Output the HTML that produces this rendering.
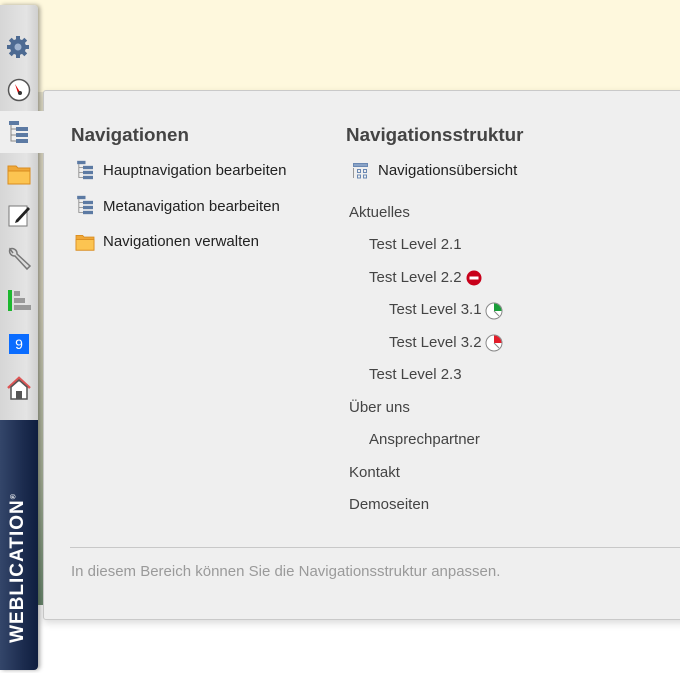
<!DOCTYPE html>
<html><head><meta charset="utf-8"><style>
*{margin:0;padding:0;box-sizing:border-box}
body{width:680px;height:673px;overflow:hidden;background:#fff;font-family:"Liberation Sans",sans-serif;position:relative}
.top{position:absolute;left:0;top:0;width:680px;height:92px;background:#fef8dd}
.strip{position:absolute;left:36px;top:92px;width:10px;height:513px;background:linear-gradient(#e6e2cc,#d6d2bc 40%,#a9b39a 75%,#6c8a70)}
.side{position:absolute;left:0;top:5px;width:38px;height:665px;background:linear-gradient(90deg,#d6d6d6,#e4e4e4 70%,#cfcfcf);border-radius:0 4px 4px 0;box-shadow:2px 0 4px rgba(0,0,0,.35)}
.logo{position:absolute;left:0;top:420px;width:38px;height:250px;background:linear-gradient(90deg,#34466a,#1c2c4f 60%,#0f1e3f);border-radius:0 0 4px 0}
.logo span{position:absolute;left:-62px;top:137px;width:160px;transform:rotate(-90deg);color:#fff;font-weight:bold;font-size:19px;letter-spacing:1px;text-align:center}
.active{position:absolute;left:0;top:111px;width:46px;height:42px;background:#efefef}
.panel{position:absolute;left:43px;top:90px;width:650px;height:530px;background:#efefef;border:1px solid #c9c9c9;border-radius:3px;box-shadow:0 3px 8px rgba(0,0,0,.15)}
.ic{position:absolute}
h2{position:absolute;font-size:18.8px;font-weight:bold;color:#444}
.it{position:absolute;font-size:15px;color:#222}
.t{position:absolute;font-size:15px;color:#444}
.hr{position:absolute;left:70px;top:547px;width:610px;height:1px;background:#c8c8c8}
.foot{position:absolute;left:71px;top:563px;font-size:15px;color:#9a9a9a}
</style></head><body>
<div class="top"></div>
<div class="strip"></div>
<div class="panel"></div>
<div class="side"></div>
<div class="active"></div>
<div class="logo"><span>WEBLICATION<sup style="font-size:7px">®</sup></span></div>

<svg class="ic" style="left:6px;top:35px" width="24" height="24" viewBox="0 0 24 24"><g fill="#4d6a92"><circle cx="12" cy="12" r="8"/><rect x="10" y="1" width="4" height="22"/><rect x="1" y="10" width="22" height="4"/><rect x="10" y="1" width="4" height="22" transform="rotate(45 12 12)"/><rect x="10" y="1" width="4" height="22" transform="rotate(-45 12 12)"/></g><circle cx="12" cy="12" r="3.5" fill="#9fb3cf"/></svg>
<svg class="ic" style="left:7px;top:78px" width="24" height="24" viewBox="0 0 24 24"><circle cx="12" cy="12" r="10.5" fill="#fff" stroke="#555" stroke-width="1.5"/><path d="M8 6 L13 14 L11 15Z" fill="#d00"/><circle cx="13" cy="15" r="2" fill="#333"/></svg>
<svg class="ic" style="left:8px;top:120px" width="22" height="24" viewBox="0 0 22 24"><g fill="#5c7aa3"><rect x="1" y="1" width="10" height="4"/><rect x="8" y="7" width="12" height="4"/><rect x="8" y="13" width="12" height="4"/><rect x="8" y="19" width="12" height="4"/></g><path d="M3 5V21H8M3 9H8M3 15H8" stroke="#888" fill="none"/></svg>
<svg class="ic" style="left:7px;top:163px" width="24" height="22" viewBox="0 0 24 22"><path d="M1 3H9L11 5H23V21H1Z" fill="#f0a838" stroke="#d98c1f"/><path d="M1 8H23V21H1Z" fill="#fcc451" stroke="#d98c1f"/></svg>
<svg class="ic" style="left:8px;top:204px" width="24" height="24" viewBox="0 0 24 24"><rect x="1" y="2" width="18" height="20" fill="#fff" stroke="#777"/><path d="M8 16L20 3L22 5L10 18L7 19Z" fill="#222"/></svg>
<svg class="ic" style="left:6px;top:246px" width="26" height="26" viewBox="0 0 26 26"><path d="M4 3A5 5 0 0 0 9 10L21 23L24 20L11 8A5 5 0 0 0 4 3L7 7Z" fill="#ddd" stroke="#777" stroke-width="1.5"/></svg>
<svg class="ic" style="left:8px;top:290px" width="24" height="22" viewBox="0 0 24 22"><rect x="0" y="0" width="4" height="21" fill="#1db82f"/><rect x="6" y="1" width="6" height="5" fill="#999"/><rect x="6" y="8" width="11" height="5" fill="#999"/><rect x="6" y="15" width="17" height="5" fill="#999"/></svg>
<div class="ic" style="left:9px;top:334px;width:20px;height:20px;background:#0a6cff;color:#fff;font-size:14px;text-align:center;line-height:20px">9</div>
<svg class="ic" style="left:6px;top:376px" width="26" height="24" viewBox="0 0 26 24"><path d="M2 12L13 2L24 12" fill="none" stroke="#d55" stroke-width="2.5"/><path d="M5 11V23H21V11L13 4Z" fill="#fff" stroke="#555" stroke-width="1.5"/><rect x="10" y="15" width="6" height="8" fill="#555"/></svg>

<h2 style="left:71px;top:124px">Navigationen</h2>
<h2 style="left:346px;top:124px">Navigationsstruktur</h2>

<svg class="ic" style="left:76px;top:160px" width="19" height="20" viewBox="0 0 22 24"><g fill="#5c7aa3"><rect x="1" y="1" width="10" height="4"/><rect x="8" y="7" width="12" height="4"/><rect x="8" y="13" width="12" height="4"/><rect x="8" y="19" width="12" height="4"/></g><path d="M3 5V21H8M3 9H8M3 15H8" stroke="#888" fill="none"/></svg>
<div class="it" style="left:103px;top:162px">Hauptnavigation bearbeiten</div>
<svg class="ic" style="left:76px;top:195px" width="19" height="20" viewBox="0 0 22 24"><g fill="#5c7aa3"><rect x="1" y="1" width="10" height="4"/><rect x="8" y="7" width="12" height="4"/><rect x="8" y="13" width="12" height="4"/><rect x="8" y="19" width="12" height="4"/></g><path d="M3 5V21H8M3 9H8M3 15H8" stroke="#888" fill="none"/></svg>
<div class="it" style="left:103px;top:198px">Metanavigation bearbeiten</div>
<svg class="ic" style="left:75px;top:233px" width="20" height="18" viewBox="0 0 24 22"><path d="M1 3H9L11 5H23V21H1Z" fill="#f0a838" stroke="#d98c1f"/><path d="M1 8H23V21H1Z" fill="#fcc451" stroke="#d98c1f"/></svg>
<div class="it" style="left:103px;top:233px">Navigationen verwalten</div>

<svg class="ic" style="left:352px;top:163px" width="16" height="16" viewBox="0 0 16 16"><g fill="none" stroke="#6a88b3"><rect x="1.5" y="0.5" width="14" height="3" fill="#8aa3c6"/><rect x="5.5" y="6.5" width="3" height="3"/><rect x="11.5" y="6.5" width="3" height="3"/><rect x="5.5" y="12" width="3" height="3"/><rect x="11.5" y="12" width="3" height="3"/></g><path d="M1.5 5V15" stroke="#999"/></svg>
<div class="it" style="left:378px;top:162px">Navigationsübersicht</div>

<div class="t" style="left:349px;top:204px">Aktuelles</div>
<div class="t" style="left:369px;top:236px">Test Level 2.1</div>
<div class="t" style="left:369px;top:269px">Test Level 2.2</div>
<svg class="ic" style="left:466px;top:270px" width="16" height="16"><circle cx="8" cy="8" r="7.5" fill="#c8001a"/><rect x="3.5" y="6.5" width="9" height="3" fill="#fff"/></svg>
<div class="t" style="left:389px;top:301px">Test Level 3.1</div>
<svg class="ic" style="left:485px;top:302px" width="18" height="18"><circle cx="9" cy="9" r="8" fill="#fff" stroke="#888"/><path d="M9 9V1.5A7.5 7.5 0 0 1 16.5 9Z" fill="#1a9e3a"/><path d="M9 9L14 14" stroke="#888"/></svg>
<div class="t" style="left:389px;top:334px">Test Level 3.2</div>
<svg class="ic" style="left:485px;top:334px" width="18" height="18"><circle cx="9" cy="9" r="8" fill="#fff" stroke="#888"/><path d="M9 9V1.5A7.5 7.5 0 0 1 16.5 9Z" fill="#e21d2a"/><path d="M9 9L14 14" stroke="#888"/></svg>
<div class="t" style="left:369px;top:366px">Test Level 2.3</div>
<div class="t" style="left:349px;top:399px">Über uns</div>
<div class="t" style="left:369px;top:431px">Ansprechpartner</div>
<div class="t" style="left:349px;top:464px">Kontakt</div>
<div class="t" style="left:349px;top:496px">Demoseiten</div>

<div class="hr"></div>
<div class="foot">In diesem Bereich können Sie die Navigationsstruktur anpassen.</div>
</body></html>
